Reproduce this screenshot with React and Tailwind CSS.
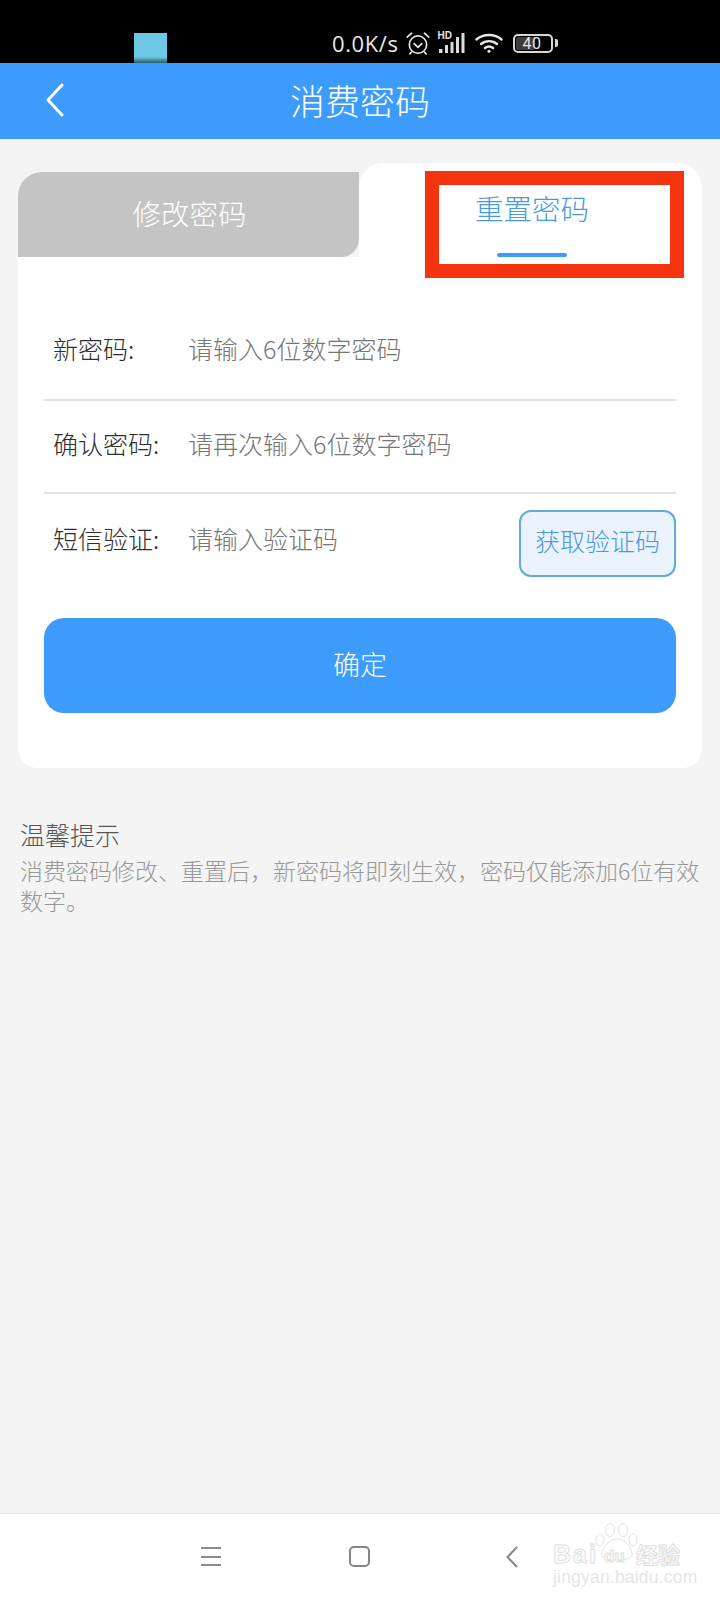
const FONT = "font-['Noto_Sans_CJK_SC','Noto_Sans',sans-serif]";

function AlarmIcon() {
  return (
    <svg width="26" height="24" viewBox="0 0 24 22" fill="none" stroke="#e4e4e4" strokeWidth="1.600" strokeLinecap="round" strokeLinejoin="round">
      <circle cx="12" cy="12.500" r="8" />
      <path d="M8.500 11.500 12 15l3.500-3.500" />
      <path d="M2 5.500 6 2M22 5.500 18 2M6 19.500l-1.500 1.500M18 19.500l1.500 1.500" />
    </svg>
  );
}

function SignalIcon() {
  return (
    <div className="relative h-[20px] w-[27px]">
      <span className="absolute left-0 top-[-2px] text-[10px] font-bold leading-[10px] text-[#e4e4e4] font-['Liberation_Sans',sans-serif]">HD</span>
      <svg width="27" height="20" viewBox="0 0 27 20" fill="#dcdcdc" className="absolute left-0 top-0">
        <rect x="1" y="16" width="3.500" height="4" />
        <rect x="7" y="12" width="3" height="8" />
        <rect x="12.500" y="9" width="3" height="11" />
        <rect x="18" y="4" width="3" height="16" />
        <rect x="23.500" y="0" width="3" height="20" />
      </svg>
    </div>
  );
}

function WifiIcon() {
  return (
    <svg width="28" height="20" viewBox="0 0 28 20" fill="none" stroke="#e8e8e8" strokeWidth="2.400" strokeLinecap="round">
      <path d="M1.500 6.500C8.500.5 19.500.5 26.500 6.500" />
      <path d="M6 11c4.500-3.800 11.500-3.800 16 0" />
      <path d="M10 15c2.300-1.800 5.700-1.800 8 0" />
      <circle cx="14" cy="18.300" r="1.500" fill="#e8e8e8" stroke="none" />
    </svg>
  );
}

function Battery() {
  return (
    <div className="flex items-center gap-[2px]">
      <div className="relative flex h-[19px] w-[40px] items-center rounded-[5px] border-2 border-[#d8d8d8] p-[1px]">
        <div className="h-full w-[19px] rounded-[2px] bg-[#3c3c3c]" />
        <span className="absolute left-[8px] top-[-1px] text-[16px] leading-[17px] tracking-[0.5px] text-[#e8e8e8] font-['Roboto',sans-serif]">40</span>
      </div>
      <div className="h-[8px] w-[3px] rounded-r-[2px] bg-[#d8d8d8]" />
    </div>
  );
}

function StatusBar() {
  return (
    <div className="flex h-[63px] bg-black">
      <div className="ml-[134px] mt-[33px] h-[30px] w-[33px] bg-gradient-to-b from-[#6cc8e4] from-[80%] to-[#2c5a68]" />
      <div className="ml-[165px] mt-[32px] flex h-[22px] items-center">
        <span className="text-[22px] font-medium leading-none tracking-[0.6px] text-[#e8e8e8] font-['Open_Sans',sans-serif]">0.0K/s</span>
        <div className="ml-[6px]"><AlarmIcon /></div>
        <div className="ml-[7px]"><SignalIcon /></div>
        <div className="ml-[10px]"><WifiIcon /></div>
        <div className="ml-[10px]"><Battery /></div>
      </div>
    </div>
  );
}

function Header() {
  return (
    <header className="relative flex h-[76px] items-center justify-center bg-[#3d9bfc]">
      <svg className="absolute left-[45px] top-[19px]" width="20" height="36" viewBox="0 0 20 36" fill="none" stroke="#fff" strokeWidth="3" strokeLinecap="round" strokeLinejoin="round">
        <path d="M17 3 3 18l14 15" />
      </svg>
      <h1 className="pb-[3px] text-[35px] font-light leading-none text-white">消费密码</h1>
    </header>
  );
}

function Tabs() {
  return (
    <div className="flex h-[94px]">
      <div className="mt-[9px] flex w-[341px] items-center justify-center rounded-tl-[24px] rounded-br-[18px] bg-[#c4c4c4] pb-[2px] pl-[2px] text-[28.500px] font-light text-white">
        修改密码
      </div>
      <div className="relative flex flex-1 flex-col items-center rounded-t-[24px] bg-white pl-[3px]">
        <span className="mt-[22px] text-[28.500px] font-light leading-[46px] text-[#4a9ad8]">重置密码</span>
        <span className="mt-[22px] h-[5px] w-[70px] rounded-full bg-[#3d9bfc]" />
        <div className="absolute left-[66px] top-[8px] h-[107px] w-[259px] border-[14px] border-[#f6340f]" />
      </div>
    </div>
  );
}

function Row({ label, placeholder, children, className }) {
  return (
    <div className={`flex h-[93px] items-center text-[25px] ${className}`}>
      <span className="ml-[9px] w-[135px] text-[#2e2e2e]">{label}</span>
      <span className="flex-1 text-[#767676]">{placeholder}</span>
      {children}
    </div>
  );
}

function Form() {
  return (
    <div className="rounded-b-[20px] bg-white px-[26px] pb-[55px] pt-[51px] font-light">
      <Row label="新密码:" placeholder="请输入6位数字密码" className="border-b-2 border-[#e2e2e2] pb-[10px]" />
      <Row label="确认密码:" placeholder="请再次输入6位数字密码" className="border-b-2 border-[#e2e2e2] pb-[5px]" />
      <Row label="短信验证:" placeholder="请输入验证码" className="pb-[3px]">
        <button className="mt-[16px] h-[67px] w-[157px] self-start rounded-[12px] border-2 border-[#62a9dc] bg-[#eaf3fc] pb-[6px] text-[25px] font-light text-[#4a9ad8]">
          获取验证码
        </button>
      </Row>
      <button className="mt-[31px] h-[95px] w-full rounded-[20px] bg-[#3d9bfc] pb-[2px] text-[27px] font-light text-white">确定</button>
    </div>
  );
}

function Tips() {
  return (
    <div className="mt-[46px] px-[20px] font-light">
      <p className="text-[25px] leading-[41px] text-[#555]">温馨提示</p>
      <p className="text-[23px] leading-[30px] text-[#979797]">
        {"消费密码修改、重置后\uFF0C新密码将即刻生效\uFF0C密码仅能添加6位有效数字\u3002"}
      </p>
    </div>
  );
}

function Watermark() {
  return (
    <div className="absolute left-[553px] top-[9px] h-[62px] w-[130px]">
      <svg className="absolute left-[42px] top-0" width="44" height="38" viewBox="0 0 44 38" fill="#fff" stroke="#e0e0e0" strokeWidth="1">
        <ellipse cx="5" cy="17" rx="4" ry="6" />
        <ellipse cx="15" cy="7" rx="4.500" ry="6.500" />
        <ellipse cx="28" cy="7" rx="4.500" ry="6.500" />
        <ellipse cx="38" cy="17" rx="4" ry="6" />
        <path d="M22 16c-8 0-15 9-15 15 0 5 7 6 15 6s15-1 15-6c0-6-7-15-15-15Z" />
      </svg>
      <span className="absolute left-0 top-[19px] text-[25px] font-bold leading-none tracking-[2px] text-white [-webkit-text-stroke:1px_#dedede] font-['Liberation_Sans',sans-serif]">Bai</span>
      <span className="absolute left-[51px] top-[25px] text-[17px] font-bold leading-none text-white [-webkit-text-stroke:1px_#dedede] font-['Liberation_Sans',sans-serif]">du</span>
      <span className="absolute left-[83px] top-[19px] text-[22px] font-bold leading-none text-white [-webkit-text-stroke:1px_#dedede]">经验</span>
      <span className="absolute left-0 top-[46px] text-[17.500px] leading-none tracking-[0.2px] text-[#e6e6e6] font-['Liberation_Sans',sans-serif]">jingyan.baidu.com</span>
    </div>
  );
}

function NavBar() {
  return (
    <nav className="relative flex h-[87px] items-start border-t border-[#e4e4e4] bg-white">
      <div className="ml-[201px] mt-[33px] flex h-[19px] w-[20px] flex-col justify-between">
        <span className="h-[2px] bg-[#8c8c8c]" />
        <span className="h-[2px] bg-[#8c8c8c]" />
        <span className="h-[2px] bg-[#8c8c8c]" />
      </div>
      <div className="ml-[128px] mt-[32px] h-[21px] w-[21px] rounded-[5px] border-2 border-[#858585]" />
      <svg className="ml-[136px] mt-[32px]" width="12" height="22" viewBox="0 0 12 22" fill="none" stroke="#858585" strokeWidth="2">
        <path d="M11 1 1.500 11 11 21" />
      </svg>
      <Watermark />
    </nav>
  );
}

export default function App() {
  return (
    <div className={`flex h-[1600px] w-[720px] flex-col overflow-hidden bg-[#f4f4f4] ${FONT}`}>
      <StatusBar />
      <Header />
      <main className="flex-1">
        <div className="mx-[18px] mt-[24px]">
          <Tabs />
          <Form />
        </div>
        <Tips />
      </main>
      <NavBar />
    </div>
  );
}
